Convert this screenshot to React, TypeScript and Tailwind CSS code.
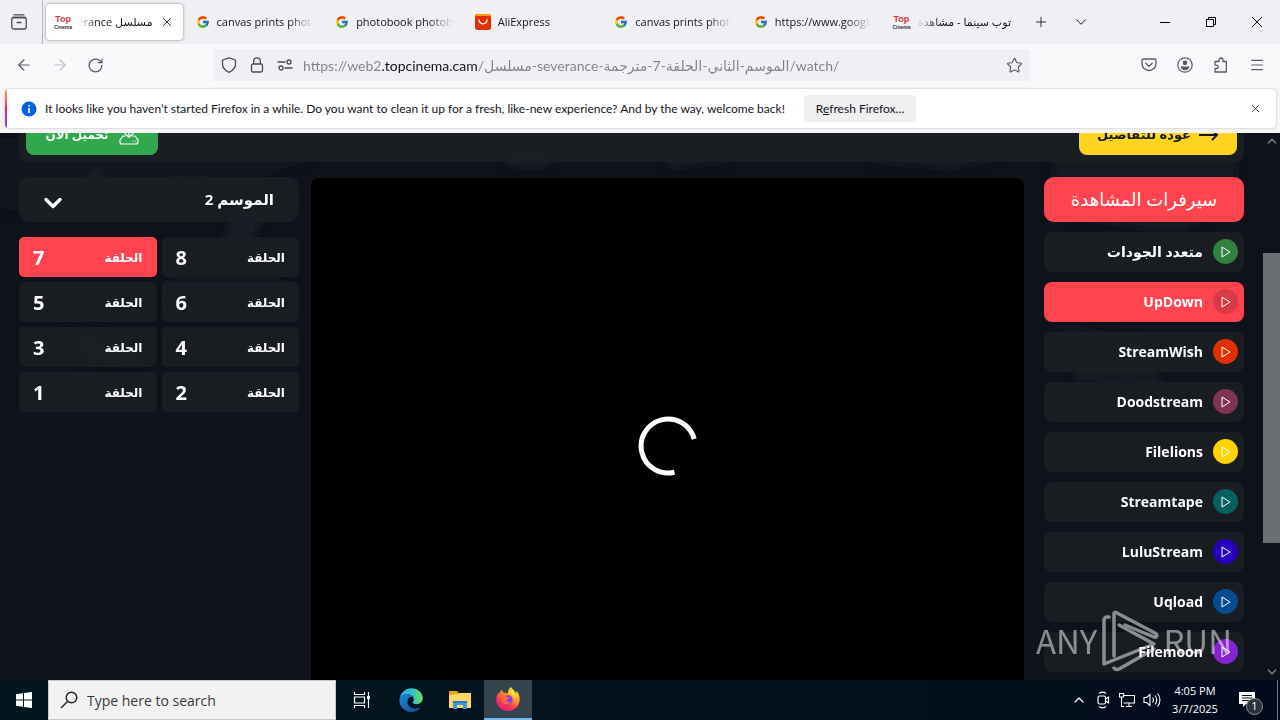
import type { ReactNode } from "react";
import { FcGoogle } from "react-icons/fc";
import {
  ArrowLeft,
  ArrowRight,
  ChevronDown,
  ChevronUp,
  Menu,
  Plus,
  RotateCw,
  Star,
  X,
} from "lucide-react";

const uiFont = "font-['Open_Sans','DejaVu_Sans',sans-serif]";

type Tab = { title: string; icon: "cinema" | "google" | "ali"; rtl?: boolean };

const tabs: Tab[] = [
  { title: "canvas prints photo", icon: "google" },
  { title: "photobook photobook", icon: "google" },
  { title: "AliExpress", icon: "ali" },
  { title: "canvas prints photo", icon: "google" },
  { title: "https://www.google.com", icon: "google" },
  { title: "توب سينما - مشاهدة", icon: "cinema", rtl: true },
];

const servers = [
  { name: "متعدد الجودات", dot: "bg-[#338040]" },
  { name: "UpDown", dot: "bg-[#d93a45]", active: true },
  { name: "StreamWish", dot: "bg-[#e03000]" },
  { name: "Doodstream", dot: "bg-[#803455]" },
  { name: "Filelions", dot: "bg-[#ffd200]" },
  { name: "Streamtape", dot: "bg-[#04615f]" },
  { name: "LuluStream", dot: "bg-[#2403bb]" },
  { name: "Uqload", dot: "bg-[#044c8f]" },
  { name: "Filemoon", dot: "bg-[#8424d0]" },
];

const episodes = [8, 7, 6, 5, 4, 3, 2, 1];

function CinemaIcon() {
  return (
    <span className="flex w-4 shrink-0 flex-col items-center font-['Liberation_Sans',sans-serif] font-bold">
      <span className="text-[9px] leading-[10px] text-[#d8343c]">Top</span>
      <span className="text-[5px] leading-[6px] text-[#333]">Cinema</span>
    </span>
  );
}

function AliIcon() {
  return (
    <svg viewBox="0 0 16 16" className="size-4 shrink-0">
      <rect width="16" height="16" rx="2.5" fill="#e62e04" />
      <path d="M0 4V2.500A2.500 2.500 0 0 1 2.500 0h11A2.500 2.500 0 0 1 16 2.500V4Z" fill="#ff9a00" />
      <rect y="2" width="16" height="7" rx="2" fill="#e62e04" />
      <path d="M4 6c.5 5 7.500 5 8 0" fill="none" stroke="#fff" strokeWidth="1.400" strokeLinecap="round" />
    </svg>
  );
}

function TabIcon({ kind }: { kind: Tab["icon"] }) {
  if (kind === "google") return <FcGoogle className="size-[14px] shrink-0" />;
  if (kind === "ali") return <AliIcon />;
  return <CinemaIcon />;
}

function TabBar() {
  return (
    <header className="flex h-11 shrink-0 items-center bg-[#f0f0f4] text-[#15141a]">
      <button aria-label="Firefox View" className="flex h-11 w-[43px] items-center justify-center border-r border-[#b5b5bd] pr-1">
        <svg viewBox="0 0 16 16" className="size-4" fill="none" stroke="#4a4a52" strokeWidth="1.300" strokeLinecap="round">
          <path d="M3 .8h10M1.500 3.500h13M6 8.500h4" />
          <rect x=".8" y="3.500" width="14.400" height="11.500" rx="2" />
        </svg>
      </button>
      <nav className="grid w-[980px] grid-cols-7 items-center pl-[3px] text-[11px]">
        <div className="mr-[3px] flex h-9 items-center rounded bg-white px-[9px] shadow-[0_0_3px_rgba(0,0,0,.45)]">
          <CinemaIcon />
          <a href="#tab" dir="rtl" className="mx-[7px] min-w-0 flex-1 overflow-hidden whitespace-nowrap [mask-image:linear-gradient(to_left,black_75%,transparent)]">
            مسلسل Severance
          </a>
          <button aria-label="Close tab">
            <X className="size-[14px]" strokeWidth={1.5} />
          </button>
        </div>
        {tabs.map((tab, i) => (
          <a key={i} href="#tab" className="flex h-9 min-w-0 items-center gap-[7px] pr-3 pl-[10px]">
            <TabIcon kind={tab.icon} />
            <span
              dir={tab.rtl ? "rtl" : "ltr"}
              className={
                tab.rtl
                  ? "min-w-0 flex-1 overflow-hidden whitespace-nowrap [mask-image:linear-gradient(to_left,black_75%,transparent)]"
                  : "min-w-0 flex-1 overflow-hidden whitespace-nowrap [mask-image:linear-gradient(to_right,black_75%,transparent)]"
              }
            >
              {tab.title}
            </span>
          </a>
        ))}
      </nav>
      <button aria-label="New tab" className="flex w-9 justify-center">
        <Plus className="size-4" strokeWidth={1.3} />
      </button>
      <button aria-label="List all tabs" className="ml-1 flex w-9 justify-center">
        <ChevronDown className="size-[18px]" strokeWidth={1.3} />
      </button>
      <div className="ml-auto flex">
        <button aria-label="Minimize" className="flex w-[46px] justify-center">
          <svg viewBox="0 0 10 10" className="size-[10px]" stroke="#000"><path d="M0 5.500h10" /></svg>
        </button>
        <button aria-label="Restore" className="flex w-[46px] justify-center">
          <svg viewBox="0 0 10 10" className="size-[10px]" stroke="#000" fill="none"><path d="M.5 2.500h7v7h-7zM2.500 2.500v-2h7v7h-2" /></svg>
        </button>
        <button aria-label="Close" className="flex w-[46px] justify-center">
          <svg viewBox="0 0 10 10" className="size-[10px]" stroke="#000"><path d="M0 0l10 10M10 0L0 10" /></svg>
        </button>
      </div>
    </header>
  );
}

function Toolbar() {
  return (
    <div className="flex h-11 shrink-0 items-center bg-[#f9f9fb] px-[15px] pb-[2px] text-[#5b5b66]">
      <div className="flex w-[198px] items-center gap-[18px]">
        <button aria-label="Back"><ArrowLeft className="size-[18px]" strokeWidth={1.5} /></button>
        <button aria-label="Forward"><ArrowRight className="size-[18px] text-[#bfbfc9]" strokeWidth={1.5} /></button>
        <button aria-label="Reload"><RotateCw className="size-[17px]" strokeWidth={1.8} /></button>
      </div>
      <div className="flex h-8 w-[817px] items-center bg-[#f0f0f4] pr-[7px] pl-2">
        <svg viewBox="0 0 16 16" className="size-4" fill="none" stroke="#4a4a52" strokeWidth="1.300" strokeLinejoin="round">
          <path d="M8 .8 14.500 3v4c0 4-3 6.800-6.500 8.300C4.500 13.800 1.500 11 1.500 7V3Z" />
        </svg>
        <svg viewBox="0 0 16 16" className="ml-3 size-4" fill="none" stroke="#4a4a52" strokeWidth="1.300">
          <rect x="2.500" y="7" width="11" height="8" rx="1.500" />
          <path d="M4.700 7V4.200a3.300 3.300 0 0 1 6.600 0V7" />
        </svg>
        <svg viewBox="0 0 16 16" className="ml-3 size-4" fill="none" stroke="#4a4a52" strokeWidth="1.300" strokeLinecap="round">
          <path d="M1 5h7M8 11h7" /><circle cx="12" cy="5" r="2" /><circle cx="4" cy="11" r="2" />
        </svg>
        <input
          aria-label="Address"
          dir="ltr"
          defaultValue="https://web2.topcinema.cam/مسلسل-severance-الموسم-الثاني-الحلقة-7-مترجمة/watch/"
          className="ml-[10px] min-w-0 flex-1 bg-[linear-gradient(to_right,#808088_78px,#15141a_78px,#15141a_174px,#808088_174px)] bg-clip-text font-['Lato','DejaVu_Sans',sans-serif] text-[14px] text-transparent outline-none"
        />
        <button aria-label="Bookmark this page"><Star className="size-[17px]" strokeWidth={1.6} /></button>
      </div>
      <div className="ml-auto flex items-center gap-5">
        <button aria-label="Save to Pocket">
          <svg viewBox="0 0 16 16" className="size-4" fill="none" stroke="currentColor" strokeWidth="1.300" strokeLinecap="round" strokeLinejoin="round">
            <path d="M2.500 2h11a1.500 1.500 0 0 1 1.500 1.500V7a7 6.500 0 0 1-14 0V3.500A1.500 1.500 0 0 1 2.500 2Z" />
            <path d="m4.800 6.200 3.200 3 3.200-3" />
          </svg>
        </button>
        <button aria-label="Account">
          <svg viewBox="0 0 16 16" className="size-4" fill="none" stroke="currentColor" strokeWidth="1.200">
            <circle cx="8" cy="8" r="7.200" />
            <circle cx="8" cy="5.800" r="2.400" fill="currentColor" stroke="none" />
            <path d="M3.500 9.500h9c-.4 2.300-2 3.700-4.500 3.700s-4.100-1.400-4.500-3.700Z" fill="currentColor" stroke="none" />
          </svg>
        </button>
        <button aria-label="Extensions">
          <svg viewBox="0 0 16 16" className="size-4" fill="none" stroke="currentColor" strokeWidth="1.300" strokeLinejoin="round">
            <path d="M6 4.500V3a2 2 0 0 1 4 0v1.500h3.300V15H2V11.500h1.500a1.700 1.700 0 0 0 0-3.400H2V4.500Z" />
          </svg>
        </button>
        <button aria-label="Menu"><Menu className="size-4" strokeWidth={1.8} /></button>
      </div>
    </div>
  );
}

function Notification() {
  return (
    <div className="h-[45px] shrink-0 bg-[#f5f5f8] pt-px pr-1 pl-[5px]">
      <div className="flex h-[39px] overflow-hidden rounded bg-white shadow-[0_0_2px_rgba(0,0,0,.3)]">
        <span className="w-[2px] bg-linear-to-b from-[#ffa436] via-[#e31587] to-[#7542e5]" />
        <div className="flex flex-1 items-center px-[14px] font-['Lato','DejaVu_Sans',sans-serif] text-[12px] text-[#15141a]">
          <svg viewBox="0 0 16 16" className="size-4 shrink-0">
            <circle cx="8" cy="8" r="7.500" fill="#0060df" />
            <path d="M8 7v5M8 4v1.600" stroke="#fff" strokeWidth="1.600" />
          </svg>
          <p className="ml-2 whitespace-nowrap">
            It looks like you haven’t started Firefox in a while. Do you want to clean it up for a fresh, like-new experience? And by the way, welcome back!
          </p>
          <button className="ml-[19px] h-[27px] rounded-sm bg-[#efeff2] px-3 whitespace-nowrap">
            R<u>e</u>fresh Firefox…
          </button>
          <button aria-label="Dismiss" className="ml-auto"><X className="size-[13px]" strokeWidth={1.5} /></button>
        </div>
      </div>
    </div>
  );
}

function Backdrop() {
  return (
    <svg aria-hidden="true" viewBox="0 0 1263 547" preserveAspectRatio="xMidYMin slice" className="absolute inset-0 size-full">
      <defs>
        <filter id="soft"><feGaussianBlur stdDeviation="4" /></filter>
      </defs>
      <g fill="#1d222c" filter="url(#soft)">
        <path d="M0 5h310v20L215 60l-30-10-65 30L0 75Z" opacity=".35" />
        <ellipse cx="522" cy="24" rx="26" ry="9" />
        <path d="M645 0h75v28l-60 8ZM860 0h130v24l-50 12-80-8Z" opacity=".5" />
        <path d="m85 40 14-8 10 26-14 8ZM165 45h45l-15 30-35-10ZM230 75l35-5-20 45-25-10Z" opacity=".7" />
        <path d="m62 196 65 8 15 24-62-4Z" opacity=".9" />
        <path d="M165 145h115v18H165Z" opacity=".6" />
        <path d="M1040 20h180v50l-60 30-120-20ZM1050 190l80 15 20 50-90-10Z" opacity=".5" />
      </g>
    </svg>
  );
}

function PlayIcon() {
  return (
    <svg viewBox="0 0 10 12" className="h-3 w-[10px]" fill="none" stroke="#fff" strokeWidth="1" strokeLinejoin="round">
      <path d="M1 1v10l8-5Z" />
    </svg>
  );
}

function Watermark() {
  return (
    <div className="pointer-events-none absolute right-[31px] bottom-2 flex h-16 items-center font-['Noto_Sans_CJK_SC',sans-serif] text-[33px] leading-10 font-normal text-white opacity-50">
      <span>ANY</span>
      <svg viewBox="0 0 58 64" className="mx-1 h-16 w-[58px]" fill="none" stroke="#fff" strokeWidth="3.500" strokeLinejoin="round" strokeLinecap="round">
        <path d="M8 9H6a3 3 0 0 0-3 3v44l50-20-35-19" />
        <path d="M13 48V6c0-2 1-2 3-1l38 20c3 2 2 5-1 4l-29-12" />
        <path d="M53 41 18 61c-2 1-3 1-5-1" />
      </svg>
      <span>RUN</span>
    </div>
  );
}

function Scrollbar() {
  return (
    <div aria-hidden="true" className="flex w-[17px] shrink-0 flex-col items-center bg-[#0e121b] text-[#777b80]">
      <ChevronUp className="mt-px size-[14px]" strokeWidth={3} />
      <div className="mt-[105px] h-[290px] w-full bg-[#6b6e72]" />
      <ChevronDown className="mt-auto mb-px size-[14px]" strokeWidth={3} />
    </div>
  );
}

function WatchPage() {
  return (
    <div className="relative flex min-h-0 flex-1 overflow-hidden bg-[#0e121a]">
      <Backdrop />
      <main dir="rtl" className="relative flex min-w-0 flex-1 flex-col px-[19px] font-bold text-white">
        <div className="flex h-[29px] shrink-0 items-end justify-between overflow-hidden rounded-b-lg bg-[#1b1f24]/90 px-[7px] pb-[7px]">
          <a href="#details" className="flex h-10 w-[158px] items-center justify-center gap-2 rounded-lg bg-[#ffd41f] text-[13px] text-[#16191f]">
            <svg viewBox="0 0 20 14" className="h-[14px] w-5" fill="none" stroke="currentColor" strokeWidth="2"><path d="M0 7h18M13 2l5 5-5 5" /></svg>
            عودة للتفاصيل
          </a>
          <a href="#download" className="flex h-10 w-[132px] items-center justify-center gap-[10px] rounded-lg bg-[#31a84d] text-[12px]">
            <svg viewBox="0 0 20 20" className="size-5" fill="none" stroke="#fff" strokeWidth="1.200" strokeLinecap="round">
              <path d="M10 1v11M6 8.500l4 4 4-4M6 11H4l-3 4v2a2 2 0 0 0 2 2h14a2 2 0 0 0 2-2v-2l-3-4h-2M14 16h.2M16.500 16h.2" />
            </svg>
            تحميل الآن
          </a>
        </div>

        <div className="mt-[15px] flex min-h-0 flex-1">
          <section className="w-[200px] shrink-0">
            <h2 className="flex h-[45px] items-center justify-center rounded-[10px] bg-[#ff444f] text-[18px] font-normal">سيرفرات المشاهدة</h2>
            <ul className="mt-[10px] flex flex-col gap-[10px]">
              {servers.map((s) => (
                <li key={s.name}>
                  <button
                    className={
                      s.active
                        ? "flex h-10 w-full items-center gap-[10px] rounded-lg bg-[#ff444f] px-[6px] pb-px text-[14px]"
                        : "flex h-10 w-full items-center gap-[10px] rounded-lg bg-[#1b1f24]/90 px-[6px] pb-px text-[14px]"
                    }
                  >
                    <span className={"flex size-[25px] items-center justify-center rounded-full " + s.dot} dir="ltr">
                      <PlayIcon />
                    </span>
                    <span>{s.name}</span>
                  </button>
                </li>
              ))}
            </ul>
          </section>

          <section aria-label="Player" className="mr-[10px] ml-[11px] flex flex-1 rounded-t-lg border border-b-0 border-[#1c1218] pr-[9px]">
            <div className="flex flex-1 items-center justify-center rounded-t-lg bg-black pt-[34px]">
              <svg viewBox="0 0 60 60" className="size-[60px]" fill="none" stroke="#fff" strokeWidth="5">
                <path d="M56.200 23A27 27 0 1 0 36.500 56.200" />
              </svg>
            </div>
          </section>

          <aside className="w-[280px] shrink-0">
            <div className="relative h-[45px] rounded-[10px] bg-[#1b1f24]/90">
              <select aria-label="الموسم" className="size-full appearance-none px-[25px] text-[15px] font-bold outline-none">
                <option>الموسم 2</option>
              </select>
              <ChevronDown className="pointer-events-none absolute top-3 left-5 size-7" strokeWidth={3} />
            </div>
            <div className="mt-[15px] grid grid-cols-2 gap-[5px]">
              {episodes.map((n) => (
                <a
                  key={n}
                  href={"#episode-" + n}
                  className={
                    n === 7
                      ? "flex h-10 items-center justify-between rounded-[5px] bg-[#ff444f] px-[14px] pt-[2px]"
                      : "flex h-10 items-center justify-between rounded-[5px] bg-[#1b1f24]/90 px-[14px] pt-[2px]"
                  }
                >
                  <span className="text-[12px]">الحلقة</span>
                  <span className="text-[20px]">{n}</span>
                </a>
              ))}
            </div>
          </aside>
        </div>
        <div dir="ltr"><Watermark /></div>
      </main>
      <div className="relative flex"><Scrollbar /></div>
    </div>
  );
}

function EdgeIcon() {
  return (
    <svg viewBox="0 0 24 24" className="size-6">
      <defs>
        <linearGradient id="edgeTop" x1="0" y1=".5" x2="1" y2=".5"><stop offset="0" stopColor="#2aa9e8" /><stop offset=".55" stopColor="#35c1c9" /><stop offset="1" stopColor="#66e05a" /></linearGradient>
        <linearGradient id="edgeLow" x1="0" y1="0" x2="1" y2="1"><stop offset="0" stopColor="#1b8bdc" /><stop offset="1" stopColor="#114a8b" /></linearGradient>
      </defs>
      <path d="M.5 11C1.500 4.500 6.500.2 12.200.2 19 .2 23.800 5 23.800 10c0 3.800-2.800 6.200-6.300 6.200-2.700 0-4-1-3.700-1.900.3-.7 1-1.300 1-3.100 0-2.500-2.500-5-6.300-5C4.300 6.200 1.500 8 .5 11Z" fill="url(#edgeTop)" />
      <path d="M.4 12C.8 8.500 4.300 6.200 8.300 6.200c2.400 0 4.700 1 5.800 2.700-3.300-.5-5.600 2-5.600 5.200 0 4.800 5.500 8 11.500 5.700.8-.3 1.300.2.700.9-2 2-5 3.200-8.300 3.200C5.500 23.900 0 18 .4 12Z" fill="url(#edgeLow)" />
    </svg>
  );
}

function FolderIcon() {
  return (
    <svg viewBox="0 0 22 20" className="h-5 w-[22px]">
      <path d="M0 1h8l2 2h11v15H0Z" fill="#e9a30f" />
      <path d="M0 5 9 4l2-1h11v15H0Z" fill="#ffd766" />
      <path d="M4 19v-8h14v8h-4v-4H8v4Z" fill="#3d9ade" />
      <path d="M4 11h14v2H4Z" fill="#2b7fc4" />
    </svg>
  );
}

function FirefoxIcon() {
  return (
    <svg viewBox="0 0 24 24" className="size-6">
      <defs>
        <linearGradient id="fox" x1=".8" y1="0" x2=".2" y2="1"><stop offset="0" stopColor="#fff44f" /><stop offset=".35" stopColor="#ffa021" /><stop offset=".65" stopColor="#ff3d4d" /><stop offset="1" stopColor="#e31587" /></linearGradient>
      </defs>
      <path d="M15 0c1 2 4 3.500 4.500 6 .8-.5 1-1.500 1-2 2.300 2.500 3.300 5.500 3.200 8.500C23.500 19 18.500 24 12 24S.3 19 .3 12.800c0-3 1-5.300 2.400-7.300 0 .7.100 1.300.4 1.800.6-2 1.500-3.300 3-4.500 0 1.200.4 2.200 1.400 2.700 1.500.1 2.500.5 3.500 1L12 5.500C12 3 13.500 1 15 0Z" fill="url(#fox)" />
      <circle cx="12" cy="12.800" r="4.600" fill="#8a3ce8" />
      <path d="M5 9.500c2-1.500 4.500-1 5.500.2 1 .9 2.300.6 3.300 1-1 1.800-3.300 1.300-3.300 2.800s2.500 2.300 4.500.8c-1.500 4-8.500 4-9.500-1Z" fill="#ff6a3a" />
      <path d="M13 6c4 1 6.500 4.500 5.500 8.500 1.800-4 1-8-2-11.500Z" fill="#ffe046" />
    </svg>
  );
}

function TaskItem({ label, active, children }: { label: string; active?: boolean; children: ReactNode }) {
  return (
    <button
      aria-label={label}
      className={
        active
          ? "flex h-10 w-12 items-center justify-center border-b-2 border-[#76b9ed] bg-[#35434c]"
          : "flex h-10 w-[49px] items-center justify-center"
      }
    >
      {children}
    </button>
  );
}

function Taskbar() {
  return (
    <footer className="flex h-10 shrink-0 items-center bg-linear-to-r from-[#02161d] via-[#03131e] to-[#020a1b] text-white">
      <button aria-label="Start" className="flex h-10 w-12 items-center justify-center">
        <svg viewBox="0 0 16 16" className="size-4" fill="#fff"><path d="M0 2.200 7 1.200v6.300H0ZM8 1l8-1v7.500H8ZM0 8.500h7v6.300l-7-1ZM8 8.500h8V16l-8-1Z" /></svg>
      </button>
      <label className="mr-px flex h-10 w-[288px] items-center border border-[#c8c8c8] bg-[#f2f2f2] pl-[11px]">
        <svg viewBox="0 0 18 18" className="size-[18px]" fill="none" stroke="#222" strokeWidth="1.400"><circle cx="11.500" cy="6.500" r="5.300" /><path d="M7.500 10.500 1 17" /></svg>
        <input aria-label="Search" placeholder="Type here to search" className="ml-[9px] min-w-0 flex-1 text-[14px] outline-none placeholder:text-[#3a3a3a]" />
      </label>
      <TaskItem label="Task View">
        <svg viewBox="0 0 18 18" className="size-[18px]" fill="none" stroke="#fff" strokeWidth="1.200">
          <path d="M1.500 1v2.500h10V1M1.500 17v-2.500h10V17M1.500 6h10v6h-10ZM15.500 1v16" />
          <path d="M14 5h3v3h-3Z" fill="#fff" stroke="none" />
        </svg>
      </TaskItem>
      <TaskItem label="Edge"><EdgeIcon /></TaskItem>
      <TaskItem label="File Explorer"><FolderIcon /></TaskItem>
      <TaskItem label="Firefox" active><FirefoxIcon /></TaskItem>
      <div className="ml-auto flex items-center">
        <button aria-label="Show hidden icons"><ChevronUp className="size-4" strokeWidth={1.8} /></button>
        <svg viewBox="0 0 16 18" className="ml-2 h-[18px] w-4" fill="none" stroke="#fff" strokeWidth="1.200">
          <rect x="3" y="5" width="7.500" height="8" rx="1.500" /><path d="m10.500 8 3-2v6l-3-2M4 2.500c2-1.500 5-1.500 7 0M4 15.500c2 1.500 5 1.500 7 0" />
        </svg>
        <svg viewBox="0 0 16 16" className="ml-2 size-4" fill="none" stroke="#fff" strokeWidth="1.100">
          <path d="M5 3.500h10.500v7.500H4.500M10 11v3M7 14.500h6M.5 1.500h4v3.500h-4ZM2.500 5v9.500H5" />
        </svg>
        <svg viewBox="0 0 18 16" className="ml-2 h-4 w-[18px]" fill="none" stroke="#fff" strokeWidth="1.100">
          <path d="M1 5.500h2.500L7 2.500v11l-3.500-3H1ZM9.500 5.500c1.300 1.500 1.300 3.500 0 5M12 3.500c2.300 2.500 2.300 6.500 0 9M14.500 1.500c3.300 3.800 3.300 9.200 0 13" />
        </svg>
        <div className="ml-2 w-[52px] text-center text-[11px] leading-[18px]">
          <div className="whitespace-nowrap">4:05 PM</div>
          <div className="whitespace-nowrap">3/7/2025</div>
        </div>
        <button aria-label="Notifications" className="relative mr-[18px] ml-[18px] flex h-10 w-5 items-center">
          <svg viewBox="0 0 16 16" className="size-4"><path d="M0 0h16v12H7l-3 3v-3H0Z" fill="#fff" /><path d="M3 3.500h10M3 6h10M3 8.500h7" stroke="#03101c" /></svg>
          <span className="absolute top-[18px] left-[7px] flex size-[17px] items-center justify-center rounded-full border border-[#8a8f94] bg-[#2b333b] text-[11px]">1</span>
        </button>
        <span className="mr-[2px] h-10 w-px bg-[#6c7580]" />
      </div>
    </footer>
  );
}

export default function App() {
  return (
    <div className={"flex h-screen flex-col overflow-hidden " + uiFont}>
      <TabBar />
      <Toolbar />
      <Notification />
      <WatchPage />
      <Taskbar />
    </div>
  );
}
